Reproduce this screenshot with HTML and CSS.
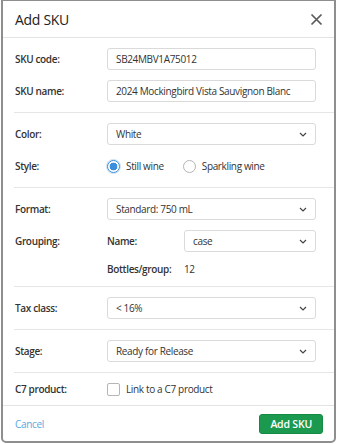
FILE: index.html
```html
<!DOCTYPE html>
<html>
<head>
<meta charset="utf-8">
<link rel="stylesheet" href="styles.css">
</head>
<body>
<div class="dialog">
  <div class="header">
    <h1 class="title">Add SKU</h1>
    <button class="close" aria-label="Close">
      <svg width="13" height="13" viewBox="0 0 13 13"><path d="M1.5 1.5 L11.5 11.5 M11.5 1.5 L1.5 11.5" stroke="#5a5a5a" stroke-width="1.7" fill="none"/></svg>
    </button>
  </div>
  <div class="body">
    <div class="section">
      <div class="row">
        <label class="label">SKU code:</label>
        <div class="field">SB24MBV1A75012</div>
      </div>
      <div class="row">
        <label class="label">SKU name:</label>
        <div class="field">2024 Mockingbird Vista Sauvignon Blanc</div>
      </div>
    </div>
    <div class="section">
      <div class="row">
        <label class="label">Color:</label>
        <div class="field select"><span>White</span><svg class="chev" width="8" height="5" viewBox="0 0 8 5"><path d="M1 1 L4 4 L7 1" stroke="#444" stroke-width="1.2" fill="none"/></svg></div>
      </div>
      <div class="row">
        <label class="label">Style:</label>
        <div class="radios">
          <span class="opt"><span class="radio on"></span>Still wine</span>
          <span class="opt"><span class="radio"></span>Sparkling wine</span>
        </div>
      </div>
    </div>
    <div class="section">
      <div class="row">
        <label class="label">Format:</label>
        <div class="field select"><span>Standard: 750 mL</span><svg class="chev" width="8" height="5" viewBox="0 0 8 5"><path d="M1 1 L4 4 L7 1" stroke="#444" stroke-width="1.2" fill="none"/></svg></div>
      </div>
      <div class="row">
        <label class="label">Grouping:</label>
        <div class="subrow">
          <span class="label">Name:</span>
          <div class="field select"><span>case</span><svg class="chev" width="8" height="5" viewBox="0 0 8 5"><path d="M1 1 L4 4 L7 1" stroke="#444" stroke-width="1.2" fill="none"/></svg></div>
        </div>
      </div>
      <div class="row short">
        <span></span>
        <div class="subrow">
          <span class="label">Bottles/group:</span>
          <span class="value">12</span>
        </div>
      </div>
    </div>
    <div class="section">
      <div class="row">
        <label class="label">Tax class:</label>
        <div class="field select"><span>&lt; 16%</span><svg class="chev" width="8" height="5" viewBox="0 0 8 5"><path d="M1 1 L4 4 L7 1" stroke="#444" stroke-width="1.2" fill="none"/></svg></div>
      </div>
    </div>
    <div class="section">
      <div class="row">
        <label class="label">Stage:</label>
        <div class="field select"><span>Ready for Release</span><svg class="chev" width="8" height="5" viewBox="0 0 8 5"><path d="M1 1 L4 4 L7 1" stroke="#444" stroke-width="1.2" fill="none"/></svg></div>
      </div>
    </div>
    <div class="section compact">
      <div class="row short">
        <label class="label">C7 product:</label>
        <span class="opt"><span class="checkbox"></span>Link to a C7 product</span>
      </div>
    </div>
  </div>
  <div class="footer">
    <a class="cancel" href="#">Cancel</a>
    <button class="primary">Add SKU</button>
  </div>
</div>
</body>
</html>
```
FILE: styles.css
```css
* { box-sizing: border-box; }
html, body { margin: 0; padding: 0; }
body {
  background: #ffffff;
  font-family: "Open Sans", "Noto Sans", "Liberation Sans", sans-serif;
  color: #333;
  width: 338px;
  height: 444px;
  letter-spacing: -0.35px;
}
.dialog {
  margin: 0 2px 1px 1px;
  height: 443px;
  border: 2px solid #8e8e8e;
  border-top-width: 1px;
  border-radius: 0 0 5px 5px;
  background: #fff;
  display: flex;
  flex-direction: column;
}
.header {
  height: 37px;
  border-bottom: 1px solid #e3e3e3;
  display: flex;
  align-items: center;
  justify-content: space-between;
  padding: 0 11px 0 12px;
}
.title {
  margin: 0;
  font-size: 14px;
  font-weight: 400;
  color: #222;
  line-height: 1;
  padding-top: 1px;
  letter-spacing: -0.3px;
}
.close {
  border: 0;
  background: none;
  padding: 0;
  width: 13px;
  height: 13px;
  display: flex;
}
.body {
  display: flex;
  flex-direction: column;
}
.section {
  margin-left: 11px;
  padding: 10px 18px 10px 1px;
  display: flex;
  flex-direction: column;
  gap: 10px;
  border-top: 1px solid #e6e6e6;
}
.section:first-child { border-top: 0; }
.section.compact { padding-top: 9px; padding-bottom: 9px; }
.row {
  display: grid;
  grid-template-columns: 92px 1fr;
  align-items: center;
  min-height: 22px;
}
.row.short { min-height: 13px; }
.label {
  font-size: 10px;
  font-weight: 600;
  color: #333;
}
.field {
  height: 22px;
  border: 1px solid #dadada;
  border-radius: 3px;
  padding: 0 8px;
  font-size: 10px;
  display: flex;
  align-items: center;
  color: #333;
}
.select { justify-content: space-between; padding-right: 8px; }
.chev { display: block; }
.radios { display: flex; gap: 19px; align-items: center; height: 22px; }
.opt {
  display: flex;
  align-items: center;
  font-size: 10px;
  color: #333;
}
.radio {
  width: 13px;
  height: 13px;
  border-radius: 50%;
  border: 1px solid #b5b5b5;
  margin-right: 6px;
  background: #fff;
}
.radio.on {
  border-color: #3a8ad6;
  background: radial-gradient(circle, #3d8ddb 0 3.6px, #fff 4.2px);
  box-shadow: 0 0 0 1px rgba(58,138,214,0.25);
}
.checkbox {
  width: 13px;
  height: 13px;
  border: 1px solid #b5b5b5;
  border-radius: 2px;
  margin-right: 6px;
}
.subrow {
  display: grid;
  grid-template-columns: 77px 1fr;
  align-items: center;
}
.value { font-size: 10px; }
.footer {
  flex: 1;
  border-top: 1px solid #e3e3e3;
  display: flex;
  align-items: center;
  justify-content: space-between;
  padding: 0 11px 0 12px;
}
.cancel {
  color: #58a8e0;
  text-decoration: none;
  font-size: 10px;
}
.primary {
  background: #1b9a4f;
  color: #fff;
  border: 1px solid #158a45;
  border-radius: 3px;
  height: 20px;
  padding: 0 10px;
  font-family: inherit;
  font-size: 10.5px;
  font-weight: 600;
  letter-spacing: -0.2px;
}
```
